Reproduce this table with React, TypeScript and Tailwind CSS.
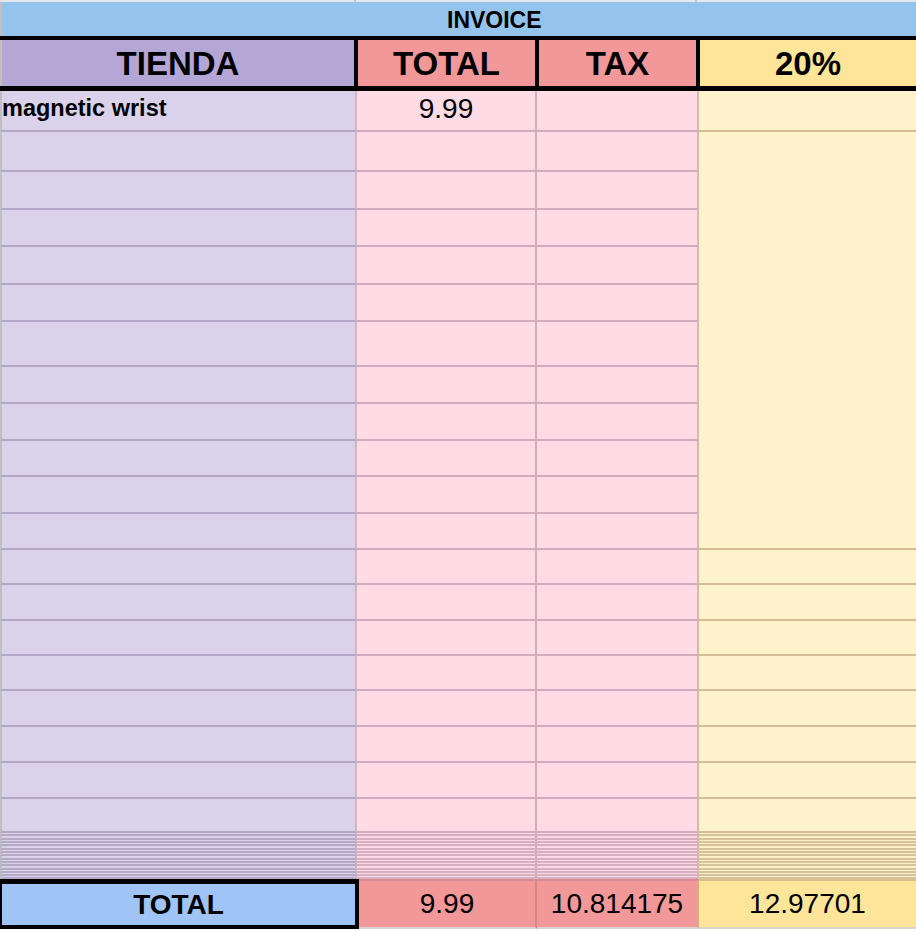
import React from 'react';

type Row = { h: string; name?: string; total?: string };

// row heights measured off the sheet (each includes its 2px bottom rule)
const rows: Row[] = [
  { h: 'h-[41px]', name: 'magnetic wrist', total: '9.99' },
  { h: 'h-[40px]' },
  { h: 'h-[38px]' },
  { h: 'h-[37px]' },
  { h: 'h-[38px]' },
  { h: 'h-[37px]' },
  { h: 'h-[45px]' },
  { h: 'h-[37px]' },
  { h: 'h-[37px]' },
  { h: 'h-[36px]' },
  { h: 'h-[37px]' },
  { h: 'h-[36px]' },
  { h: 'h-[35px]' },
  { h: 'h-[36px]' },
  { h: 'h-[35px]' },
  { h: 'h-[35px]' },
  { h: 'h-[36px]' },
  { h: 'h-[36px]' },
  { h: 'h-[36px]' },
  { h: 'h-[34px]' },
];

// collapsed rows near the bottom
const thin = [
  'h-[3px]', 'h-[4px]', 'h-[3px]', 'h-[3px]', 'h-[4px]', 'h-[3px]', 'h-[3px]',
  'h-[4px]', 'h-[3px]', 'h-[3px]', 'h-[4px]', 'h-[3px]', 'h-[3px]', 'h-[3px]',
];

const App: React.FC = () => {
  return (
    <div className="w-[916px] h-[931px] overflow-hidden bg-white text-black font-['Liberation_Sans',Arial,sans-serif] flex flex-col">
      {/* top strip */}
      <div className="h-[2px] flex bg-[#e4e7ea]">
        <div className="w-[356px] border-r-2 border-r-[#c4c7ca]" />
        <div className="w-[341px] border-r-2 border-r-[#c4c7ca]" />
      </div>

      {/* title bar */}
      <div className="h-[34px] flex items-center bg-[#94c4eb] border-l-2 border-l-[#bfbfc3] pl-[445px] pt-[3px]">
        <span className="text-[23px] font-bold leading-none">INVOICE</span>
      </div>

      {/* header row */}
      <div className="h-[55px] flex border-t-4 border-b-[5px] border-black">
        <div className="w-[358px] border-l-2 border-l-[#bfbfc3] border-r-4 border-r-black bg-[#b4a7d6] flex items-center justify-center">
          <span className="text-[33px] font-bold leading-none">TIENDA</span>
        </div>
        <div className="w-[181px] border-r-4 border-black bg-[#f39898] flex items-center justify-center">
          <span className="text-[33px] font-bold leading-none">TOTAL</span>
        </div>
        <div className="w-[161px] border-r-4 border-black bg-[#f39898] flex items-center justify-center">
          <span className="text-[33px] font-bold leading-none">TAX</span>
        </div>
        <div className="flex-1 bg-[#ffe599] flex items-center justify-center">
          <span className="text-[33px] font-bold leading-none">20%</span>
        </div>
      </div>

      {/* body */}
      <div className="grid grid-cols-[357px_180px_162px_217px]">
        {rows.map((r, i) => (
          <React.Fragment key={i}>
            <div className={`${r.h} border-l-2 border-l-[#bfbfc3] border-r-2 border-r-[#d3b3c4] border-b-2 border-b-[#b2a8c5] bg-[#dad2ea]`}>
              {r.name && <div className="pt-[6px] text-[23.5px] font-bold leading-none">{r.name}</div>}
            </div>
            <div className={`${r.h} border-r-2 border-r-[#d1acbd] border-b-2 border-b-[#d4abbd] bg-[#ffdbe6] text-center`}>
              {r.total && <div className="pt-[4px] text-[28px] leading-none">{r.total}</div>}
            </div>
            <div className={`${r.h} border-r-2 border-r-[#d6b9a6] border-b-2 border-b-[#d4abbd] bg-[#ffdbe6]`} />
            {i === 1 && <div className="row-span-11 border-b-2 border-b-[#d4bd97] bg-[#fff2cc]" />}
            {(i === 0 || i > 11) && <div className={`${r.h} border-b-2 border-b-[#d4bd97] bg-[#fff2cc]`} />}
          </React.Fragment>
        ))}
        {thin.map((h, i) => (
          <React.Fragment key={`t${i}`}>
            <div className={`${h} border-l-2 border-l-[#bfbfc3] border-r-2 border-r-[#d3b3c4] border-b-2 border-b-[#b4aac7] bg-[#d9d1e9]`} />
            <div className={`${h} border-r-2 border-r-[#d1acbd] border-b-2 border-b-[#d6afc0] bg-[#fcd9e4]`} />
            <div className={`${h} border-r-2 border-r-[#d6b9a6] border-b-2 border-b-[#d6afc0] bg-[#fcd9e4]`} />
            <div className={`${h} border-b-2 border-b-[#d6c19b] bg-[#fdf0ca]`} />
          </React.Fragment>
        ))}
      </div>

      {/* total row */}
      <div className="h-[50px] flex">
        <div className="w-[359px] border-l-2 border-t-[5px] border-r-4 border-b-4 border-black bg-[#a0c4f6] flex items-center justify-center">
          <span className="text-[28px] font-bold leading-none">TOTAL</span>
        </div>
        <div className="w-[178px] border-t-2 border-t-[#d98a94] border-r-2 border-r-[#d88585] border-b-2 border-b-[#dcd2d4] bg-[#f39898] flex items-center justify-center">
          <span className="text-[28px] leading-none">9.99</span>
        </div>
        <div className="w-[162px] border-t-2 border-t-[#d98a94] border-r-2 border-r-[#d8a890] border-b-2 border-b-[#dcd2d4] bg-[#f39898] flex items-center justify-center">
          <span className="text-[28px] leading-none">10.814175</span>
        </div>
        <div className="flex-1 border-t-2 border-t-[#d8c08a] border-b-2 border-b-[#dcd6cc] bg-[#ffe599] flex items-center justify-center">
          <span className="text-[28px] leading-none">12.97701</span>
        </div>
      </div>
    </div>
  );
};

export default App;
